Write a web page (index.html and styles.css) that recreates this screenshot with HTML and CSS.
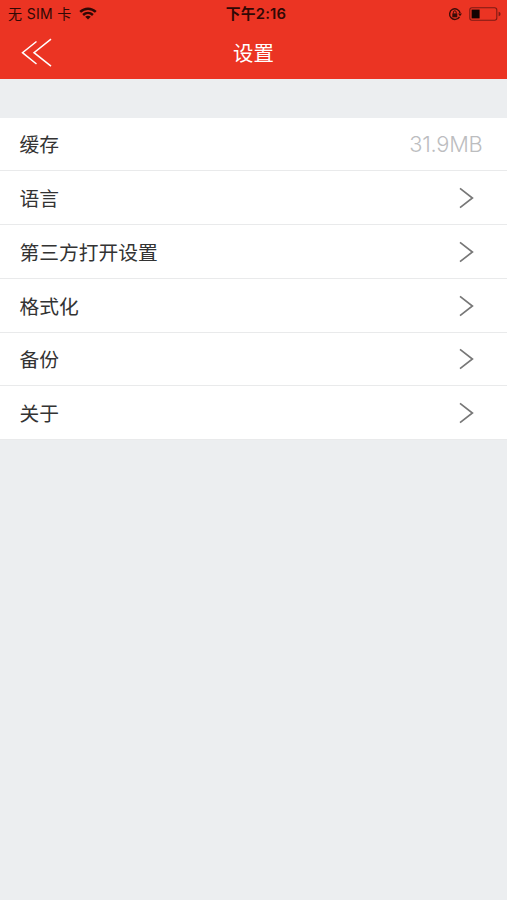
FILE: index.html
```html
<!DOCTYPE html>
<html lang="zh-CN">
<head>
<meta charset="utf-8">
<title>设置</title>
<link rel="stylesheet" href="styles.css">
</head>
<body>
<header class="header">
  <div class="status">
    <div class="status-left">
      <span>无 SIM 卡</span>
      <svg class="wifi" width="18" height="13" viewBox="0 0 18 13" fill="none" stroke="#300805" stroke-width="2.5"><path d="M1.2 4.9C5.8.6 12.2.6 16.8 4.9M4.1 8C7 5.4 11 5.4 13.9 8"/><path d="M9 12.6 6.2 9.8C7.9 8.5 10.1 8.5 11.8 9.8Z" fill="#300805" stroke="none"/></svg>
    </div>
    <span class="time">下午2:16</span>
    <div class="status-right">
      <svg width="14" height="14" viewBox="0 0 14 14" fill="none" stroke="#3c0c08" stroke-width="1.4"><path d="M11.5 9.8A5.3 5.3 0 1 1 12.1 6"/><path d="m10 6.4 4 0-2 2.8z" fill="#3c0c08" stroke="none"/><path d="M4.3 6.4h5v3.9h-5z" fill="#3c0c08" stroke="none"/><path d="M5.4 6.6V5.2a1.4 1.4 0 0 1 2.8 0v1.4" stroke-width="1"/></svg>
      <svg width="32" height="14" viewBox="0 0 32 14"><rect x=".8" y=".8" width="27" height="12.4" rx="2.2" fill="none" stroke="#7d1a14" stroke-width="1.1"/><rect x="2.6" y="2.6" width="8" height="8.8" fill="#120202"/><path d="M29.6 4.7Q31.6 5 31.6 7T29.6 9.3Z" fill="#7d1a14"/></svg>
    </div>
  </div>
  <nav class="nav">
    <svg class="back" width="32" height="30" viewBox="0 0 32 30" fill="none" stroke="#fff" stroke-width="1.5"><path d="M15.5 3.5 1.5 14.7 15.5 26M30 1.2 13 14.7 30 28.2"/></svg>
    <h1 class="title">设置</h1>
  </nav>
</header>
<main class="list">
  <div class="row"><span class="label">缓存</span><span class="value">31.9MB</span></div>
  <div class="row"><span class="label">语言</span><svg class="chevron" viewBox="0 0 15 22"><path d="M1 1.3 13.4 11 1 20.7"/></svg></div>
  <div class="row"><span class="label">第三方打开设置</span><svg class="chevron" viewBox="0 0 15 22"><path d="M1 1.3 13.4 11 1 20.7"/></svg></div>
  <div class="row"><span class="label">格式化</span><svg class="chevron" viewBox="0 0 15 22"><path d="M1 1.3 13.4 11 1 20.7"/></svg></div>
  <div class="row"><span class="label">备份</span><svg class="chevron" viewBox="0 0 15 22"><path d="M1 1.3 13.4 11 1 20.7"/></svg></div>
  <div class="row"><span class="label">关于</span><svg class="chevron" viewBox="0 0 15 22"><path d="M1 1.3 13.4 11 1 20.7"/></svg></div>
</main>
</body>
</html>
```
FILE: styles.css
```css
* { box-sizing: border-box; }
body {
  margin: 0;
  min-height: 900px;
  background: #eceef0;
  color: #333;
  font-family: Inter, "Noto Sans CJK SC", sans-serif;
}
.header {
  height: 79px;
  background: #eb3423;
}
.status {
  display: grid;
  grid-template-columns: 1fr auto 1fr;
  align-items: center;
  height: 27px;
  padding: 0 6px 0 8px;
  color: #300805;
  font-size: 14px;
  line-height: 27px;
}
.status-left, .status-right {
  display: flex;
  align-items: center;
}
.status-left {
  gap: 7px;
  padding-bottom: 1px;
  letter-spacing: .35px;
}
.status-right {
  gap: 7px;
  justify-content: flex-end;
}
.time {
  padding: 1px 0 0 3px;
  font-size: 14.8px;
  font-weight: 600;
  letter-spacing: .2px;
}
.nav {
  display: grid;
  grid-template-columns: 1fr auto 1fr;
  align-items: center;
  height: 52px;
  padding: 0 21px;
}
.back { margin-bottom: 1px; }
.title {
  margin: 0;
  color: #fff;
  font-size: 20.4px;
  font-weight: 400;
  line-height: 52px;
  padding-top: 1px;
}
.list {
  margin-top: 38.6px;
  background: #fff;
}
.row {
  display: flex;
  align-items: center;
  justify-content: space-between;
  height: 53.75px;
  padding: 0 33px 0 19.5px;
  border-bottom: 1px solid #e9eaeb;
  font-size: 19.75px;
  line-height: 53px;
}
.label { padding-top: 4px; }
.value {
  margin-right: -8.5px;
  padding-top: 2px;
  color: #bcbdbf;
  font-size: 21.8px;
  font-weight: 300;
  letter-spacing: -.25px;
}
.chevron {
  width: 15px;
  height: 22px;
  margin-top: 1px;
  fill: none;
  stroke: #777;
  stroke-width: 1.7;
}
```
